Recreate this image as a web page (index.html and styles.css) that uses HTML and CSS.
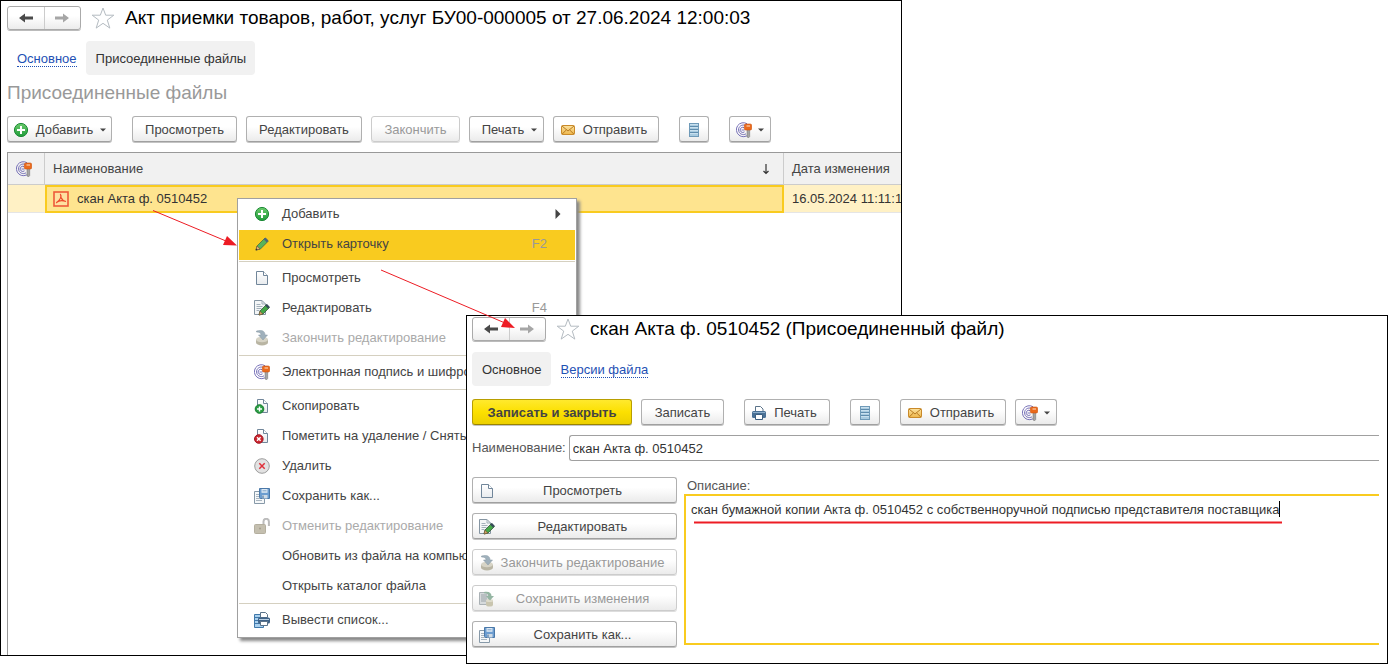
FILE: index.html
```html
<!DOCTYPE html>
<html lang="ru">
<head>
<meta charset="utf-8">
<title>Акт приемки товаров, работ, услуг</title>
<link rel="stylesheet" href="styles.css">
</head>
<body>
<svg class="sprite" aria-hidden="true">
  <defs>
    <linearGradient id="g-green" x1="0" y1="0" x2="0" y2="1"><stop offset="0" stop-color="#6ccb6c"/><stop offset="1" stop-color="#1f9c3a"/></linearGradient>
    <linearGradient id="g-mail" x1="0" y1="0" x2="0" y2="1"><stop offset="0" stop-color="#fce3a0"/><stop offset="1" stop-color="#eeb64a"/></linearGradient>
    <linearGradient id="g-page" x1="0" y1="0" x2="0" y2="1"><stop offset="0" stop-color="#ffffff"/><stop offset="1" stop-color="#e8ebee"/></linearGradient>
  </defs>
  <symbol id="i-back" viewBox="0 0 16 16"><path d="M1 8l6-4.500v3h8v3H7v3z" fill="#4a4a4a"/></symbol>
  <symbol id="i-forward" viewBox="0 0 16 16"><path d="M15 8L9 3.500v3H1v3h8v3z" fill="#a6a6a6"/></symbol>
  <symbol id="i-star" viewBox="0 0 24 24"><path d="M12 2l2.700 7.200h8.100l-6.500 4.900 2.500 8L12 17.300 5.200 22.100l2.500-8L1.200 9.200h8.100z" fill="#fff" stroke="#b4bbc1" stroke-width="1"/></symbol>
  <symbol id="i-add" viewBox="0 0 16 16"><circle cx="8" cy="8" r="6.600" fill="url(#g-green)" stroke="#1c8a36"/><path d="M8 4v8M4 8h8" stroke="#fff" stroke-width="2"/></symbol>
  <symbol id="i-mail" viewBox="0 0 16 16"><rect x="1.500" y="3.500" width="13" height="9" rx="1" fill="url(#g-mail)" stroke="#c98a2a"/><path d="M2 4l6 5 6-5M2 12.200l4.500-4.400M14 12.200L9.500 7.800" fill="none" stroke="#b87a20"/></symbol>
  <symbol id="i-list" viewBox="0 0 16 16"><rect x="3.500" y="1.500" width="9" height="13" fill="#a9cbe0" stroke="#6f9ab8"/><path d="M4 4.500h8M4 7.500h8M4 10.500h8" stroke="#5f8cad"/><path d="M4 5.500h8M4 8.500h8M4 11.500h8M4 2.500h8" stroke="#c9e0ee"/></symbol>
  <symbol id="i-sign" viewBox="0 0 16 16"><g fill="none" stroke="#7771b8" stroke-width="1"><path d="M12.500 12.500A7 7 0 1 1 11 1.700"/><path d="M10 11.800A4.800 4.800 0 1 1 9.500 3.500"/><path d="M8.500 9.800A2.600 2.600 0 1 1 8 5.600M5.500 8h3"/></g><path d="M11 7h2.700v7.500l-1.300 1.500-1.400-1.200z" fill="#a5a5a5" stroke="#6d6d6d" stroke-width=".5"/><rect x="8.300" y="2" width="7.400" height="6" rx="1.500" fill="#ea6a1c" stroke="#c9520f" stroke-width=".6"/><path d="M10.500 4h3.500" stroke="#ffe0c8"/></symbol>
  <symbol id="i-pdf" viewBox="0 0 16 16"><rect x="1" y="1" width="14" height="14" fill="#fee0a0" stroke="#ee5a3a" stroke-width="1.600"/><path d="M7.200 3c1.800 2 .2 6-4 9M8 6.500c.8 2 2 3.300 5 4M3.500 11.500c2.500-2.200 5.500-2.400 9.500-1" fill="none" stroke="#ee4a2b" stroke-width="1.200"/></symbol>
  <symbol id="i-pencil" viewBox="0 0 16 16"><path d="M2 14l1-4L11 2l3.200 3.200-8 8z" fill="#58b45a" stroke="#4a6b45" stroke-width=".8"/><path d="M9.700 3.300L11.500 1.600l3 3-1.800 1.800z" fill="#4b6579"/><path d="M2 14l1.100-4 3 3z" fill="#e7b67a" stroke="#7a5430" stroke-width=".7"/><path d="M1.600 14.400l.6-2 1.400 1.400z" fill="#333"/></symbol>
  <symbol id="i-page" viewBox="0 0 16 16"><path d="M2.500 1.500h7l4 4v9h-11z" fill="url(#g-page)" stroke="#71869a"/><path d="M9.500 1.500v4h4" fill="#fff" stroke="#71869a"/></symbol>
  <symbol id="i-edit" viewBox="0 0 16 16"><path d="M.5.500h7.500l3.500 3.500v10.500H.500z" fill="#f4f6f7" stroke="#8595a2"/><path d="M8 .500v3.500h3.500M2.500 4.500h4M2.500 6.500h6M2.500 8.500h5M2.500 10.500h3" fill="none" stroke="#a3b0ba"/><path d="M5 15l1-4 6.500-6.500 3 3L9 14z" fill="#45a849" stroke="#33553a" stroke-width=".8"/><path d="M11.300 5.700L13 4l2.700 2.700L14 8.400z" fill="#374b5a"/><path d="M5 15l1-3.800L8.800 14z" fill="#d9a469" stroke="#70502f" stroke-width=".6"/></symbol>
  <symbol id="i-finish" viewBox="0 0 16 16"><ellipse cx="8" cy="12.500" rx="6" ry="3" fill="#b9b5a3"/><path d="M2 9.500v3h12v-3z" fill="#b9b5a3"/><ellipse cx="8" cy="9.500" rx="6" ry="2.800" fill="#d7d4c6"/><path d="M2.500 1C8-.5 11 1 11 5h2.500L9 10 4.500 5H7c0-2-1.500-3-4.500-3z" fill="#9fb0bb" stroke="#8597a3" stroke-width=".5"/></symbol>
  <symbol id="i-savechanges" viewBox="0 0 16 16"><path d="M.5 1.500h9v12h-9z" fill="#d6dadc" stroke="#aab1b5"/><path d="M2 4h6M2 6h6M2 8h6M2 10h5" stroke="#9ba3a8"/><rect x="7" y="9" width="7" height="6.500" rx="2" fill="#c9c5af"/><ellipse cx="10.500" cy="9.500" rx="3.500" ry="1.500" fill="#dedbcb"/><path d="M5 1c5-1 7.500 1 7.500 4H15l-4 4.500L7 5h2.500c0-1.800-1.500-2.700-4.500-2.700z" fill="#94b5a2"/></symbol>
  <symbol id="i-copy" viewBox="0 0 16 16"><path d="M3.500 1.500h6l4 4v9h-10z" fill="url(#g-page)" stroke="#71869a"/><path d="M9.500 1.500v4h4" fill="#fff" stroke="#71869a"/><circle cx="5.500" cy="11" r="4.300" fill="#2a9e43" stroke="#177a2e"/><path d="M5.500 8.500v5M3 11h5" stroke="#fff" stroke-width="1.400"/></symbol>
  <symbol id="i-mark" viewBox="0 0 16 16"><path d="M3.500 1.500h6l4 4v9h-10z" fill="url(#g-page)" stroke="#71869a"/><path d="M9.500 1.500v4h4" fill="#fff" stroke="#71869a"/><circle cx="4.800" cy="11" r="4.300" fill="#cc2630" stroke="#a0161f"/><path d="M3 9.200l3.600 3.600M6.600 9.200L3 12.800" stroke="#fff" stroke-width="1.400"/></symbol>
  <symbol id="i-delete" viewBox="0 0 16 16"><circle cx="8" cy="8" r="7.300" fill="#e2e2e2" stroke="#9d9d9d"/><path d="M5.300 5.300l5.400 5.400M10.700 5.300l-5.400 5.400" stroke="#e0303a" stroke-width="1.500"/></symbol>
  <symbol id="i-saveas" viewBox="0 0 16 16"><path d="M.5 3.500h10v12H.5z" fill="#f6f8f9" stroke="#8799a8"/><path d="M2 6.500h3M2 8.500h3M2 10.500h6M2 12.500h6" stroke="#a9b5bf"/><path d="M5.500.500h10v10h-9l-1-1z" fill="#6c9dd0" stroke="#4a78a8"/><rect x="7.500" y="1" width="6" height="3.800" fill="#dce8f3"/><rect x="8" y="7" width="5.500" height="3.500" fill="#cfdbe6"/><path d="M9 7.500v3" stroke="#3d6a9a"/><path d="M8.500 2.800h4" stroke="#7fa4c8"/></symbol>
  <symbol id="i-unlock" viewBox="0 0 16 16"><path d="M9.500 8V3.500a2.700 2.700 0 0 1 5.400 0V8" fill="none" stroke="#bcbcbc" stroke-width="2"/><rect x=".5" y="6.500" width="11" height="9" rx="1" fill="#c4bfaf" stroke="#b4af9f"/><circle cx="6" cy="10.500" r="1" fill="#a39e8c"/></symbol>
  <symbol id="i-printlist" viewBox="0 0 16 16"><path d="M.5 2.500h9v13h-9z" fill="#a9d0ee" stroke="#3f78aa"/><path d="M1 5.500h8M1 8.500h8M1 11.500h8" stroke="#3f78aa"/><path d="M6.500.500h5l2 2v3h-7z" fill="#fff" stroke="#5b7389"/><rect x="4" y="5.500" width="12" height="6" rx="1.500" fill="#3f6287"/><path d="M5 7.500h10" stroke="#b9cfe2"/><path d="M6.500 9.500h7v4h-7z" fill="#fff" stroke="#5b7389"/></symbol>
  <symbol id="i-print" viewBox="0 0 16 16"><path d="M4.500 1.500h5l2.500 2.500v3H4.500z" fill="#fff" stroke="#5b7389"/><rect x="1" y="6" width="14" height="7" rx="1.500" fill="#4a7196"/><path d="M2 7.500h12" stroke="#8fb0cc"/><path d="M4.500 9.500h7v5h-7z" fill="#fff" stroke="#3c5f80"/></symbol>
  <symbol id="i-drop" viewBox="0 0 6 4"><path d="M0 .500h6L3 3.500z" fill="#444"/></symbol>
  <symbol id="i-sub" viewBox="0 0 6 10"><path d="M.5 0v10l5-5z" fill="#444"/></symbol>
  <symbol id="i-down" viewBox="0 0 8 12"><path d="M4 1v9.500M1.500 8L4 10.500 6.500 8" fill="none" stroke="#333" stroke-width="1.200"/></symbol>
</svg>

<div class="desktop">
  <section class="window window-list">
    <header class="titlebar">
      <div class="history">
        <button type="button" aria-label="Назад"><svg class="icon"><use href="#i-back"/></svg></button>
        <button type="button" aria-label="Вперед"><svg class="icon"><use href="#i-forward"/></svg></button>
      </div>
      <svg class="star"><use href="#i-star"/></svg>
      <h1 class="title">Акт приемки товаров, работ, услуг БУ00-000005 от 27.06.2024 12:00:03</h1>
    </header>
    <nav class="tabs">
      <a class="tab" href="#main"><span>Основное</span></a>
      <a class="tab tab-active" href="#files">Присоединенные файлы</a>
    </nav>
    <h2 class="subtitle">Присоединенные файлы</h2>
    <div class="toolbar">
      <div class="group"><button type="button" class="btn btn-add"><svg class="icon"><use href="#i-add"/></svg>Добавить<svg class="drop"><use href="#i-drop"/></svg></button></div>
      <div class="group">
        <button type="button" class="btn btn-view">Просмотреть</button>
        <button type="button" class="btn btn-edit">Редактировать</button>
        <button type="button" class="btn btn-finish" disabled>Закончить</button>
        <button type="button" class="btn btn-printmenu">Печать<svg class="drop"><use href="#i-drop"/></svg></button>
        <button type="button" class="btn btn-send"><svg class="icon"><use href="#i-mail"/></svg>Отправить</button>
      </div>
      <div class="group"><button type="button" class="btn btn-list" aria-label="Список"><svg class="icon"><use href="#i-list"/></svg></button></div>
      <div class="group"><button type="button" class="btn btn-sign" aria-label="Электронная подпись"><svg class="icon"><use href="#i-sign"/></svg><svg class="drop"><use href="#i-drop"/></svg></button></div>
    </div>
    <div class="grid">
      <table class="files">
        <colgroup><col class="col-sign"><col><col class="col-date"></colgroup>
        <thead>
          <tr>
            <th><svg class="icon"><use href="#i-sign"/></svg></th>
            <th><div class="head">Наименование<svg class="sort"><use href="#i-down"/></svg></div></th>
            <th>Дата изменения</th>
          </tr>
        </thead>
        <tbody>
          <tr>
            <td></td>
            <td class="current"><div class="file"><svg class="icon"><use href="#i-pdf"/></svg>скан Акта ф. 0510452</div></td>
            <td>16.05.2024 11:11:1</td>
          </tr>
        </tbody>
      </table>
    </div>
    <div class="menu">
      <button type="button" class="item"><svg class="icon"><use href="#i-add"/></svg><span>Добавить</span><svg class="sub"><use href="#i-sub"/></svg></button>
      <button type="button" class="item item-active"><svg class="icon"><use href="#i-pencil"/></svg><span>Открыть карточку</span><kbd>F2</kbd></button>
      <hr>
      <button type="button" class="item"><svg class="icon"><use href="#i-page"/></svg><span>Просмотреть</span></button>
      <button type="button" class="item"><svg class="icon"><use href="#i-edit"/></svg><span>Редактировать</span><kbd>F4</kbd></button>
      <button type="button" class="item" disabled><svg class="icon"><use href="#i-finish"/></svg><span>Закончить редактирование</span></button>
      <hr>
      <button type="button" class="item"><svg class="icon"><use href="#i-sign"/></svg><span>Электронная подпись и шифро</span></button>
      <hr>
      <button type="button" class="item"><svg class="icon"><use href="#i-copy"/></svg><span>Скопировать</span></button>
      <button type="button" class="item"><svg class="icon"><use href="#i-mark"/></svg><span>Пометить на удаление / Снять</span></button>
      <button type="button" class="item"><svg class="icon"><use href="#i-delete"/></svg><span>Удалить</span></button>
      <button type="button" class="item"><svg class="icon"><use href="#i-saveas"/></svg><span>Сохранить как...</span></button>
      <button type="button" class="item" disabled><svg class="icon"><use href="#i-unlock"/></svg><span>Отменить редактирование</span></button>
      <button type="button" class="item"><svg class="icon"></svg><span>Обновить из файла на компьют</span></button>
      <button type="button" class="item"><svg class="icon"></svg><span>Открыть каталог файла</span></button>
      <hr>
      <button type="button" class="item"><svg class="icon"><use href="#i-printlist"/></svg><span>Вывести список...</span></button>
    </div>
  </section>

  <section class="window window-card">
    <header class="titlebar">
      <div class="history">
        <button type="button" aria-label="Назад"><svg class="icon"><use href="#i-back"/></svg></button>
        <button type="button" aria-label="Вперед"><svg class="icon"><use href="#i-forward"/></svg></button>
      </div>
      <svg class="star"><use href="#i-star"/></svg>
      <h1 class="title">скан Акта ф. 0510452 (Присоединенный файл)</h1>
    </header>
    <nav class="tabs">
      <a class="tab tab-active" href="#card">Основное</a>
      <a class="tab" href="#versions"><span>Версии файла</span></a>
    </nav>
    <div class="toolbar">
      <div class="group">
        <button type="button" class="btn btn-primary">Записать и закрыть</button>
        <button type="button" class="btn btn-write">Записать</button>
      </div>
      <div class="group"><button type="button" class="btn btn-print"><svg class="icon"><use href="#i-print"/></svg>Печать</button></div>
      <div class="group"><button type="button" class="btn btn-list" aria-label="Список"><svg class="icon"><use href="#i-list"/></svg></button></div>
      <div class="group">
        <button type="button" class="btn btn-send"><svg class="icon"><use href="#i-mail"/></svg>Отправить</button>
        <button type="button" class="btn btn-sign" aria-label="Электронная подпись"><svg class="icon"><use href="#i-sign"/></svg><svg class="drop"><use href="#i-drop"/></svg></button>
      </div>
    </div>
    <div class="name-row">
      <label for="name">Наименование:</label>
      <input id="name" type="text" value="скан Акта ф. 0510452">
    </div>
    <div class="body">
      <div class="actions">
        <button type="button" class="btn"><svg class="icon"><use href="#i-page"/></svg><span>Просмотреть</span></button>
        <button type="button" class="btn"><svg class="icon"><use href="#i-edit"/></svg><span>Редактировать</span></button>
        <button type="button" class="btn" disabled><svg class="icon"><use href="#i-finish"/></svg><span>Закончить редактирование</span></button>
        <button type="button" class="btn" disabled><svg class="icon"><use href="#i-savechanges"/></svg><span>Сохранить изменения</span></button>
        <button type="button" class="btn"><svg class="icon"><use href="#i-saveas"/></svg><span>Сохранить как...</span></button>
      </div>
      <div class="description">
        <label for="description">Описание:</label>
        <textarea id="description">скан бумажной копии Акта ф. 0510452 с собственноручной подписью представителя поставщика</textarea>
      </div>
    </div>
  </section>

  <svg class="marks" aria-hidden="true">
    <g fill="#ed1c24" stroke="#ed1c24">
      <path d="M153 210.500L226 241M381 270l124 53" fill="none"/>
      <path d="M237 245.500l-14-.5 4-9zM515 328l-14-1 4-9z" stroke="none"/>
      <path d="M694 522.500h588" stroke-width="2"/>
      <path d="M1279.500 501v16" stroke="#000"/>
    </g>
  </svg>
</div>
</body>
</html>
```

FILE: styles.css
```css
* { box-sizing: border-box; }

body {
  margin: 0;
  background: #fff;
  color: #333;
  font: 13px/16px "Liberation Sans", Arial, sans-serif;
}

button, input, textarea, kbd { font: inherit; color: inherit; }
a { color: inherit; text-decoration: none; }
svg { display: block; flex: none; }

.sprite { position: absolute; width: 0; height: 0; }
.icon { width: 16px; height: 16px; }
.drop { width: 6px; height: 4px; }

.desktop {
  position: relative;
  height: 100vh;
  min-height: 671px;
  overflow: hidden;
}

.window {
  position: absolute;
  display: flex;
  flex-direction: column;
  border: 1px solid #000;
  background: #fff;
}
.window-list { inset: 0 492px 15px 0; padding: 5px 0 0 6px; overflow: hidden; }
.window-card { inset: 315px 6px 7px 466px; padding: 1px 8px 0 5px; }

/* Title bar */
.titlebar { display: flex; align-items: flex-start; }
.history {
  display: flex;
  width: 74px;
  height: 24px;
  margin-bottom: 1px;
  border: 1px solid #aaa;
  border-radius: 3px;
  background: linear-gradient(#fff 40%, #ececec);
  box-shadow: 0 1px 0 #bbb;
}
.history button {
  flex: 1;
  display: flex;
  align-items: center;
  justify-content: center;
  padding: 0;
  border: 0;
  background: none;
}
.history button + button { border-left: 1px solid #ccc; }
.star { width: 24px; height: 24px; margin: 0 10px; }
.title { margin: 0; color: #000; font-size: 19px; line-height: 24px; font-weight: 400; white-space: nowrap; }

/* Tabs */
.tabs { display: flex; margin-top: 10px; }
.tab { padding: 10px 9px 8px 10px; border-radius: 4px; }
.tab-active { background: #f1f1f1; }
.tab span { color: #1e50b4; border-bottom: 1px dotted #1e50b4; }

.subtitle { margin: 6px 0 0; color: #999; font-size: 19px; line-height: 24px; font-weight: 400; }

/* Buttons */
.toolbar { display: flex; gap: 20px; margin-top: 11px; }
.group { display: flex; gap: 9px; }
.btn {
  display: flex;
  align-items: center;
  justify-content: center;
  height: 26px;
  margin-bottom: 1px;
  padding: 1px 6px 0;
  border: 1px solid #b0b0b0;
  border-bottom-color: #a0a0a0;
  border-radius: 3px;
  background: linear-gradient(#fff 40%, #ebebeb);
  box-shadow: 0 1px 0 #c4c4c4;
  color: #444;
  white-space: nowrap;
}
.btn:disabled { border-color: #ccc; box-shadow: 0 1px 0 #ddd; color: #999; }
.btn-add { width: 105px; gap: 7px; }
.btn-view { width: 105px; }
.btn-edit { width: 116px; }
.btn-finish { width: 89px; }
.btn-printmenu { width: 75px; gap: 7px; padding-left: 12px; }
.btn-send { width: 106px; gap: 7px; padding-right: 11px; }
.btn-list { width: 30px; }
.btn-sign { width: 42px; gap: 6px; }
.btn-write { width: 83px; }
.btn-print { width: 86px; gap: 7px; padding-right: 12px; }
.btn-primary {
  width: 160px;
  border-color: #b89e00;
  border-bottom-color: #9a8400;
  background: linear-gradient(#ffe92e, #fce000 50%, #ecd000);
  font-weight: 700;
}

/* File table */
.grid {
  flex: 1;
  margin-top: 9px;
  border-top: 1px solid #999;
  border-left: 1px solid #999;
}
.files { width: 100%; border-collapse: separate; border-spacing: 0; table-layout: fixed; }
.col-sign { width: 37px; }
.col-date { width: 117px; }
.files th {
  height: 32px;
  padding: 0 8px;
  border-right: 1px solid #ccc;
  border-bottom: 1px solid #ccc;
  background: #f1f1f1;
  color: #444;
  font-weight: 400;
  text-align: left;
  white-space: nowrap;
}
.files td {
  height: 28px;
  padding: 0 0 0 8px;
  border-bottom: 1px solid #e5e5e5;
  background: #fff1c5;
  overflow: hidden;
  white-space: nowrap;
}
.files th:last-child { padding-right: 0; border-right: 0; }
.files .current { padding: 0 6px; border: 2px solid #f9cb1f; background: #fee48f; }
.head, .file { display: flex; align-items: center; }
.head { justify-content: space-between; }
.file { gap: 8px; }
.sort { width: 8px; height: 12px; margin-right: 5px; }

/* Context menu */
.menu {
  position: absolute;
  top: 197px;
  left: 236px;
  width: 340px;
  padding: 1px;
  border: 1px solid #a0a0a0;
  background: #fff;
  box-shadow: 3px 3px 3px #888;
}
.item {
  display: flex;
  align-items: center;
  gap: 12px;
  width: 100%;
  height: 30px;
  padding: 0 28px 2px 15px;
  border: 0;
  background: none;
  color: #444;
  text-align: left;
  white-space: nowrap;
}
.item span { flex: 1; }
.item:disabled { color: #aaa; }
.item-active { background: #f9cb1f; }
.item kbd { color: #999; }
.sub { width: 6px; height: 10px; margin-right: -14px; }
.menu hr { height: 1px; margin: 1px 0 2px; border: 0; background: #d5d0c0; }

/* File card */
.window-card .toolbar { margin-top: 13px; }
.name-row { display: flex; align-items: center; gap: 3px; margin-top: 9px; }
.name-row label, .description label { color: #555; }
.name-row input {
  flex: 1;
  height: 26px;
  padding: 0 3px;
  border: 1px solid #a0a0a0;
  border-right: 0;
  border-radius: 3px 0 0 3px;
}
.body { display: flex; gap: 7px; margin-top: 16px; }
.actions { display: flex; flex-direction: column; gap: 9px; width: 205px; }
.actions span { flex: 1; text-align: center; }
.description { flex: 1; display: flex; flex-direction: column; }
.description label { padding: 1px 3px 0; }
.description textarea {
  flex: 1;
  padding: 6px 5px;
  border: 2px solid #f9cb1f;
  border-right: 0;
  margin-bottom: 3px;
  outline: 0;
  resize: none;
}

/* Arrows, underline and text caret drawn over the windows */
.marks { position: absolute; inset: 0; width: 100%; height: 100%; pointer-events: none; }
```
